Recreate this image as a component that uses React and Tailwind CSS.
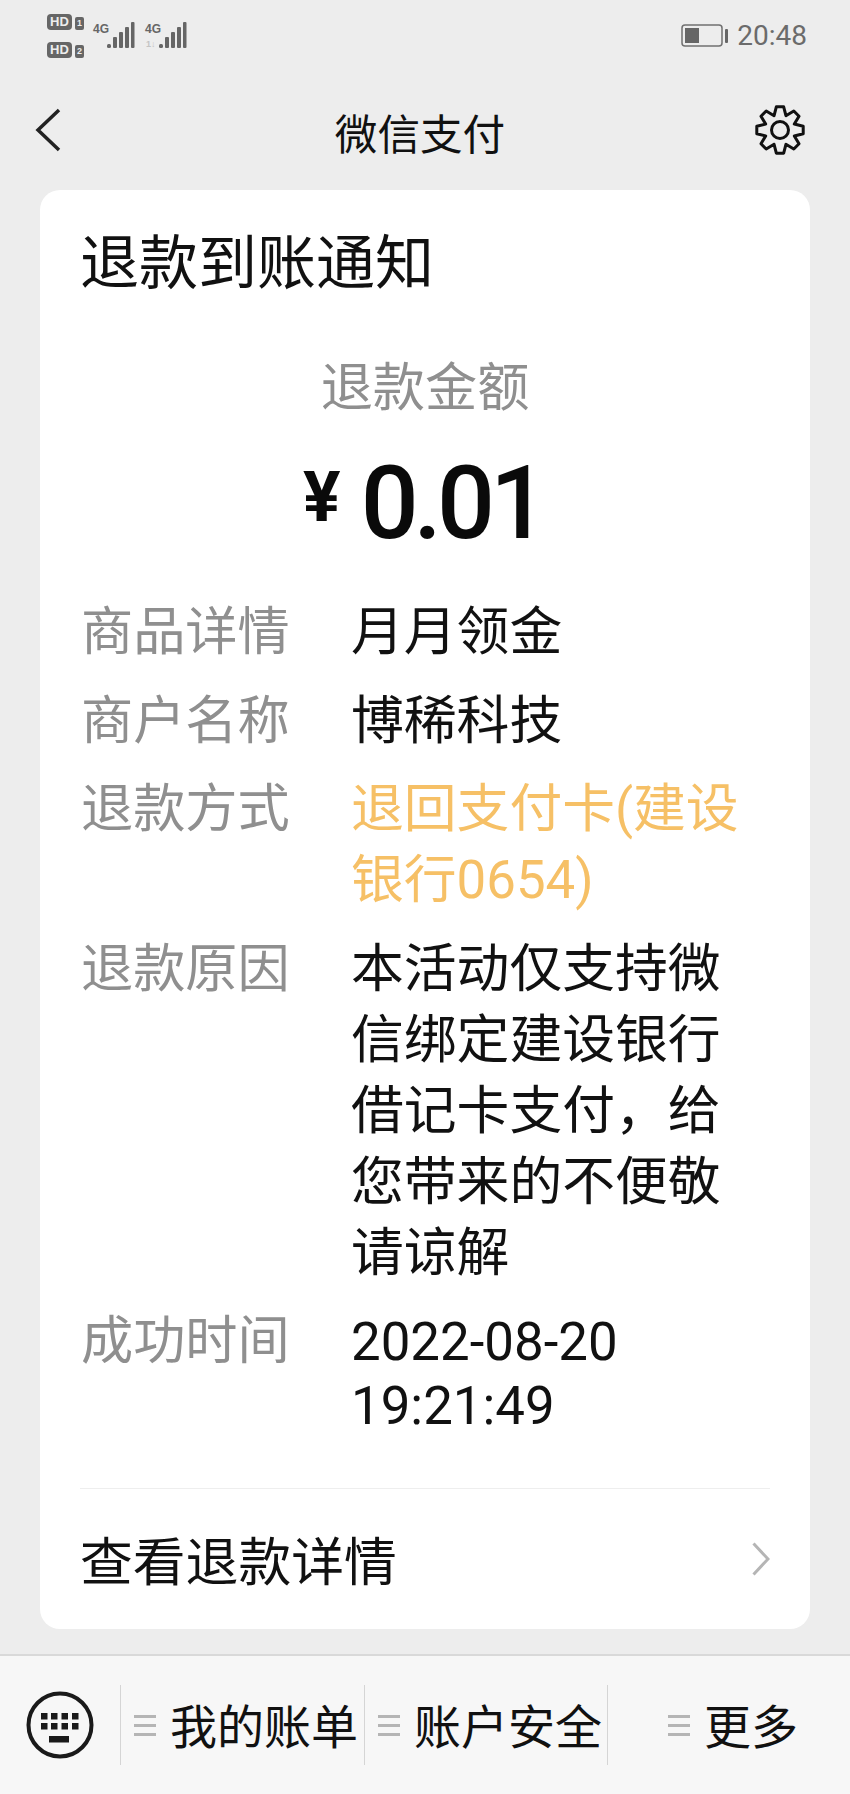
const FONT = "font-['Roboto','Noto_Sans_CJK_SC',sans-serif]";

// 8 tooth cog outline, the teeth are drawn as a stroked polygon
function gearPoints() {
    const pts = [];
    for (let i = 0; i < 8; i++) {
        const a = (i * Math.PI) / 4 - Math.PI / 2;
        const step = Math.PI / 4;
        [
            [-0.5, 15.5],
            [-0.2, 23.5],
            [0.2, 23.5],
            [0.5, 15.5],
        ].forEach(([k, r]) => {
            const t = a + k * step;
            pts.push(`${(25 + r * Math.cos(t)).toFixed(2)},${(25 + r * Math.sin(t)).toFixed(2)}`);
        });
    }
    return pts.join(" ");
}

function HdBadge({ n }) {
    return (
        <div className="flex items-center gap-[3px]">
            <span className="w-[25px] h-[16px] rounded-[4px] bg-[#666] text-[#ededed] text-[13px] leading-[16px] font-bold text-center font-['Liberation_Sans',sans-serif]">
                HD
            </span>
            <span className="w-[9px] h-[13px] mt-[3px] rounded-[2px] bg-[#666] text-[#ededed] text-[9px] leading-[13px] font-bold text-center font-['Liberation_Sans',sans-serif]">
                {n}
            </span>
        </div>
    );
}

function Signal({ extra }) {
    return (
        <div className="relative w-[42px] h-[30px]">
            <span className="absolute left-0 top-[1px] text-[#666] text-[12px] leading-[12px] font-bold font-['Liberation_Sans_Narrow','Liberation_Sans',sans-serif]">
                4G
            </span>
            {extra && (
                <span className="absolute left-[1px] top-[18px] text-[#c4c4c4] text-[9px] leading-[9px] font-bold font-['Liberation_Sans',sans-serif]">
                    1↓
                </span>
            )}
            <svg className="absolute left-[14px] top-0" width="28" height="27" viewBox="0 0 28 27" fill="#666">
                <rect x="0" y="22" width="4" height="4" rx="1.5" />
                <rect x="6" y="15" width="4" height="11" rx="1" />
                <rect x="12" y="10" width="4" height="16" rx="1" />
                <rect x="18" y="5" width="4" height="21" rx="1" />
                <rect x="24" y="0" width="3.5" height="26" rx="1" />
            </svg>
        </div>
    );
}

function Row({ label, children, valueClass = "text-[#111]", leading = "leading-[71px]" }) {
    return (
        <div className="flex text-[52.8px]">
            <div className="w-[271px] pl-[1px] shrink-0 text-[52.2px] text-[#8f8f8f] leading-[71px]">{label}</div>
            <div className={`w-[395px] ${leading} ${valueClass}`}>{children}</div>
        </div>
    );
}

function MenuItem({ label }) {
    return (
        <div className="flex items-center gap-[14px]">
            <div className="flex flex-col gap-[6px] w-[22px]">
                <div className="h-[3px] bg-[#b5b5b5]" />
                <div className="h-[3px] bg-[#b5b5b5]" />
                <div className="h-[3px] bg-[#b5b5b5]" />
            </div>
            <span className="mt-[5px] text-[47px] leading-[60px] text-[#111] whitespace-nowrap">{label}</span>
        </div>
    );
}

export default function App() {
    return (
        <div className={`w-[850px] h-[1794px] flex flex-col overflow-hidden bg-[#ededed] ${FONT}`}>
            {/* status bar */}
            <div className="h-[80px] shrink-0 flex justify-between pl-[47px] pr-[43px]">
                <div className="flex pt-[14px]">
                    <div className="flex flex-col gap-[12px]">
                        <HdBadge n="1" />
                        <HdBadge n="2" />
                    </div>
                    <div className="flex gap-[10px] ml-[9px] pt-[8px]">
                        <Signal />
                        <Signal extra />
                    </div>
                </div>
                <div className="flex items-start pt-[18px]">
                    <svg className="mt-[6px]" width="48" height="24" viewBox="0 0 48 24">
                        <rect x="1" y="1" width="40" height="21" rx="3" fill="none" stroke="#707070" strokeWidth="1.5" />
                        <rect x="4" y="4" width="14" height="15" fill="#666" />
                        <rect x="44" y="5" width="3" height="14" rx="1" fill="#666" />
                    </svg>
                    <span className="ml-[8px] mt-[4px] text-[28px] leading-[28px] text-[#6b6b6b]">20:48</span>
                </div>
            </div>

            {/* nav */}
            <div className="h-[110px] shrink-0 relative flex items-center justify-center pr-[10px]">
                <svg className="absolute left-[35px] top-[28px]" width="26" height="44" viewBox="0 0 26 44" fill="none" stroke="#222" strokeWidth="3.5">
                    <path d="M24 2 L3 22 L24 42" />
                </svg>
                <span className="text-[42.6px] leading-[56px] text-[#111]">微信支付</span>
                <svg className="absolute left-[755px] top-[25px]" width="50" height="50" viewBox="0 0 50 50" fill="none" stroke="#111" strokeWidth="3" strokeLinejoin="round">
                    <polygon points={gearPoints()} />
                    <circle cx="25" cy="25" r="8.5" />
                </svg>
            </div>

            {/* card */}
            <div className="mx-[40px] h-[1439px] shrink-0 bg-white rounded-[20px] px-[40px] pt-[38px]">
                <div className="text-[59px] leading-[72px] text-[#111]">退款到账通知</div>
                <div className="mt-[53px] text-center text-[52.2px] leading-[72px] text-[#8f8f8f]">退款金额</div>
                <div className="mt-[28px] h-[100px] flex items-center justify-center text-[#0a0a0a] pr-[4px]">
                    <span className="text-[70px] leading-[100px] font-bold mr-[20px] -mt-[12px]">¥</span>
                    <span className="text-[102px] leading-[100px] font-medium tracking-[-5px]">0.01</span>
                </div>
                <div className="mt-[44px] flex flex-col gap-[17.5px]">
                    <Row label="商品详情">月月领金</Row>
                    <Row label="商户名称">博稀科技</Row>
                    <Row label="退款方式" valueClass="text-[#f6c066]">退回支付卡(建设银行0654)</Row>
                    <Row label="退款原因">本活动仅支持微信绑定建设银行借记卡支付，给您带来的不便敬请谅解</Row>
                    <Row label="成功时间" leading="leading-[64px] pt-[4px]">2022-08-20 19:21:49</Row>
                </div>
                <div className="mt-[50px] h-px bg-[#eeeeee]" />
                <div className="h-[148px] flex items-center justify-between">
                    <span className="text-[52.8px] leading-[72px] text-[#111]">查看退款详情</span>
                    <svg className="-mt-[8px]" width="18" height="34" viewBox="0 0 18 34" fill="none" stroke="#b5b5b5" strokeWidth="3">
                        <path d="M1.5 1.5 L16 17 L1.5 32.5" />
                    </svg>
                </div>
            </div>

            {/* bottom bar */}
            <div className="mt-[25px] flex-1 bg-[#f7f7f7] border-t-2 border-[#d9d9d9] flex items-center">
                <div className="w-[120px] shrink-0 flex justify-center">
                    <svg width="68" height="68" viewBox="0 0 68 68" fill="#1a1a1a">
                        <circle cx="34" cy="34" r="31.5" fill="none" stroke="#1a1a1a" strokeWidth="4" />
                        <rect x="15" y="22" width="6.5" height="6.5" />
                        <rect x="25" y="22" width="6.5" height="6.5" />
                        <rect x="35.5" y="22" width="6.5" height="6.5" />
                        <rect x="46" y="22" width="6.5" height="6.5" />
                        <rect x="15" y="32" width="6.5" height="6.5" />
                        <rect x="25" y="32" width="6.5" height="6.5" />
                        <rect x="35.5" y="32" width="6.5" height="6.5" />
                        <rect x="46" y="32" width="6.5" height="6.5" />
                        <rect x="23" y="45" width="20" height="6.5" />
                    </svg>
                </div>
                <div className="w-[244px] h-[80px] shrink-0 border-l border-[#d5d5d5] flex items-center pl-[13px]">
                    <MenuItem label="我的账单" />
                </div>
                <div className="w-[243px] h-[80px] shrink-0 border-l border-[#d5d5d5] flex items-center pl-[13px]">
                    <MenuItem label="账户安全" />
                </div>
                <div className="flex-1 h-[80px] border-l border-[#d5d5d5] flex items-center pl-[60px]">
                    <MenuItem label="更多" />
                </div>
            </div>
        </div>
    );
}
